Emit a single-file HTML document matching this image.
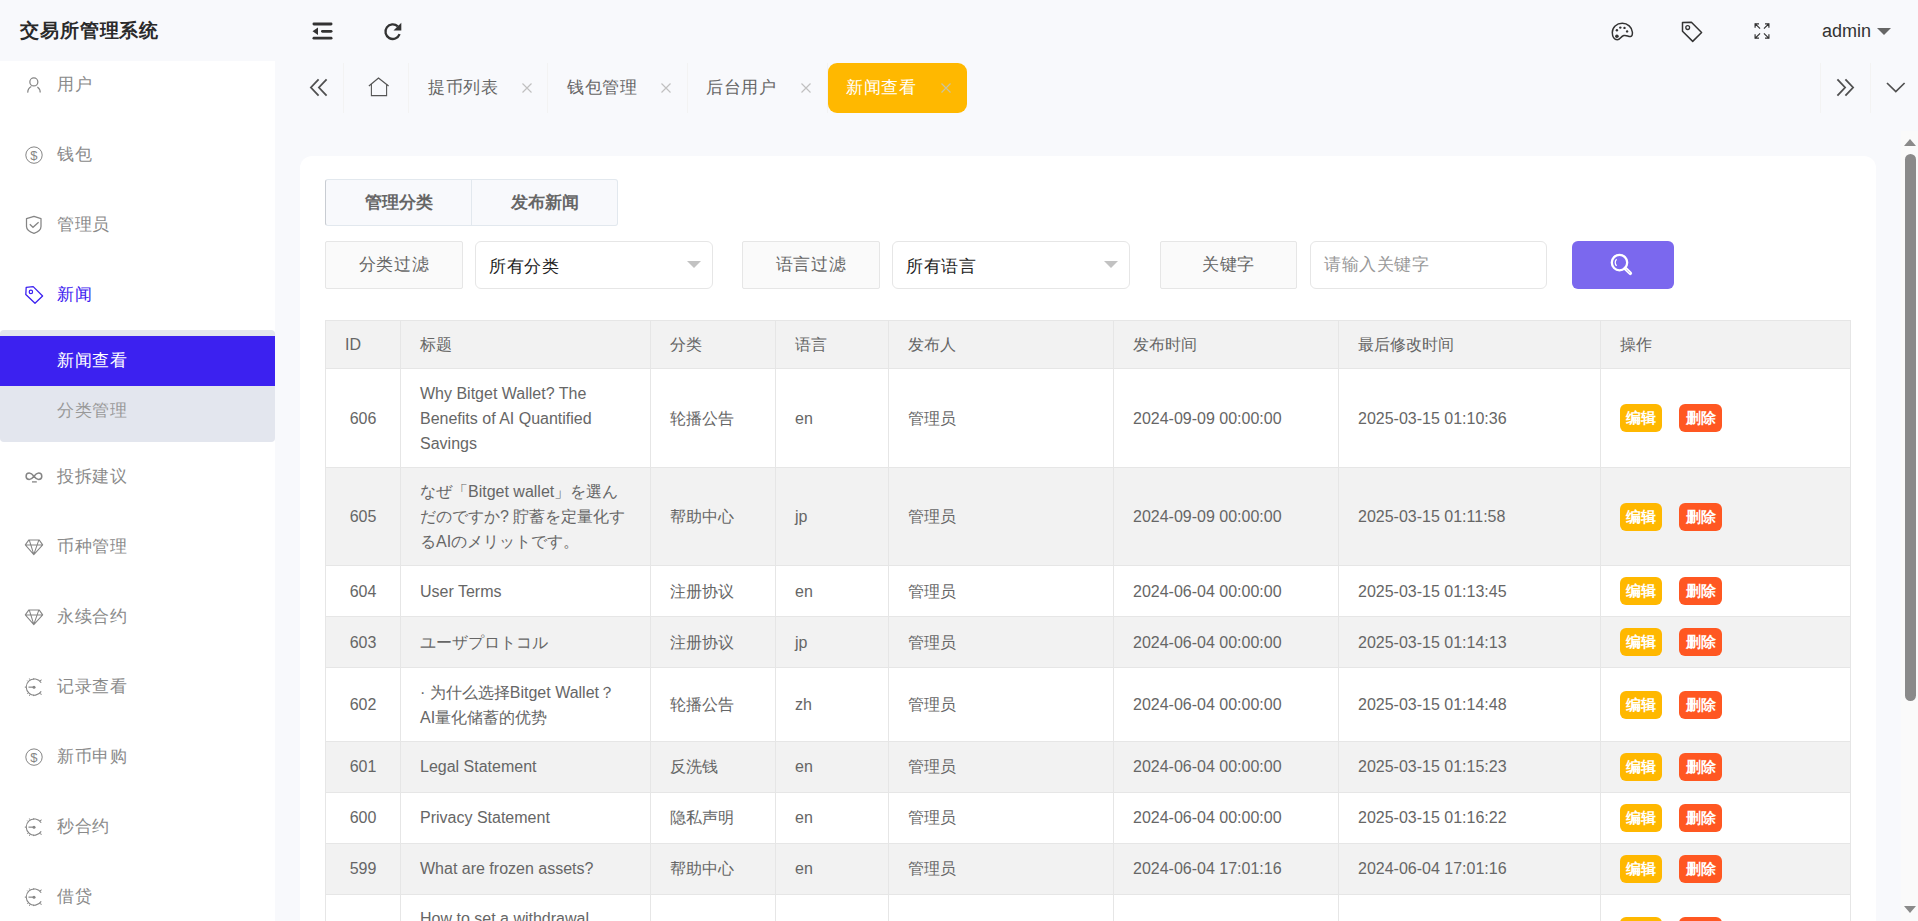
<!DOCTYPE html>
<html><head><meta charset="utf-8">
<style>
*{box-sizing:border-box;margin:0;padding:0}
html,body{width:1918px;height:921px;overflow:hidden}
body{position:relative;background:#f8f9fc;font-family:"Liberation Sans",sans-serif;color:#666}
.abs{position:absolute}
/* header */
#title{left:20px;top:16px;font-size:19px;letter-spacing:0.9px;font-weight:bold;color:#2a2a2a;line-height:30px;white-space:nowrap}
/* sidebar */
#side{left:0;top:61px;width:275px;height:860px;background:#fff;overflow:hidden}
.mi{position:absolute;left:0;width:275px;height:50px;line-height:50px;font-size:17px;letter-spacing:0.6px;color:#8a8a8a;white-space:nowrap}
.mi .tx{position:absolute;left:57px;top:0}
.mi svg{position:absolute;left:26px;top:17px}
#sub{position:absolute;left:0;top:269px;width:275px;height:112px;background:#e3e6ee;border-radius:4px}
/* tabs */
.tab{position:absolute;top:63px;height:50px;line-height:50px;font-size:17px;letter-spacing:0.6px;color:#666;white-space:nowrap}
.vd{position:absolute;top:63px;width:1px;height:50px;background:#f3f3f3}
.x{position:absolute;top:83px;width:10px;height:10px}
/* card */
#card{left:300px;top:156px;width:1576px;height:800px;background:#fff;border-radius:12px}
.lbl{position:absolute;top:241px;height:48px;line-height:46px;border:1px solid #e6e6e6;background:#fafafa;border-radius:2px;text-align:center;font-size:17px;letter-spacing:0.6px;color:#666}
.sel{position:absolute;top:241px;height:48px;line-height:50px;border:1px solid #e6e6e6;background:#fff;border-radius:6px;font-size:17px;color:#222;padding-left:13px;font-size:17px;letter-spacing:0.6px}
.tri{position:absolute;top:19px;line-height:0;width:0;height:0;border-left:7px solid transparent;border-right:7px solid transparent;border-top:7px solid #c2c2c2}
/* table */
#tbl{left:325px;top:320px;width:1526px}
.row{position:absolute;left:0;width:1526px;border-bottom:1px solid #e6e6e6;border-left:1px solid #e6e6e6}
.row>div{position:absolute;top:0;height:100%;border-right:1px solid #e6e6e6;display:flex;align-items:center;padding-left:19px;font-size:16px;line-height:25px;color:#666}
.ev{background:#f2f2f2}
.up>div:not(.c7){padding-bottom:2px}
.c0{left:0;width:75px;justify-content:center;padding-left:0 !important}
.c1{left:75px;width:250px;padding-right:15px}
.c2{left:325px;width:125px}
.c3{left:450px;width:113px}
.c4{left:563px;width:225px}
.c5{left:788px;width:225px}
.c6{left:1013px;width:262px}
.c7{left:1275px;width:250px}
.bd{display:inline-block;height:28px;line-height:28px;padding:0 6px;border-radius:6px;color:#fff;font-size:15px;font-weight:bold;margin-right:17px}
.bw{background:#ffb800}
.br{background:#ff5722;padding:0 6.5px}
/* scrollbar */
#sb{left:1901px;top:131px;width:17px;height:790px;background:#fafafa}
</style></head><body>

<div id="title" class="abs">交易所管理系统</div>

<!-- top toolbar icons -->
<svg class="abs" style="left:312px;top:22px" width="21" height="19" viewBox="0 0 21 19">
  <rect x="0.5" y="0.6" width="20" height="2.8" rx="1.4" fill="#333"/>
  <rect x="9" y="7.9" width="11.5" height="2.8" rx="1.4" fill="#333"/>
  <rect x="0.5" y="14.8" width="20" height="2.8" rx="1.4" fill="#333"/>
  <path d="M0.5 9.3 L6 5.6 L6 13 Z" fill="#333"/>
</svg>
<svg class="abs" style="left:382px;top:21px" width="22" height="22" viewBox="0 0 22 22">
  <path d="M17.6 13.2 A7.3 7.3 0 1 1 15.8 5.4" fill="none" stroke="#333" stroke-width="2.3"/>
  <path d="M19.3 1.8 L19.3 9.6 L11.5 9.6 Z" fill="#333"/>
</svg>

<svg class="abs" style="left:1611px;top:22px" width="23" height="19" viewBox="0 0 23 19">
  <path d="M11.3 1.3 C5.5 1.3 1.3 5.3 1.3 10.5 C1.3 15 3.5 17.7 6.3 17.7 C9.2 17.7 9.8 14.3 12.8 13.5 C15.8 12.8 17 14.7 19.6 14.5 C21.5 14.2 21.5 12 21.4 10.2 C21 5.3 16.6 1.3 11.3 1.3 Z" fill="none" stroke="#333" stroke-width="1.5"/>
  <circle cx="5.9" cy="14.2" r="1.8" fill="#333"/>
  <circle cx="5.9" cy="8.2" r="1.2" fill="#333"/>
  <circle cx="9.3" cy="5.6" r="1.2" fill="#333"/>
  <circle cx="13.5" cy="5.9" r="1.2" fill="#333"/>
  <circle cx="16.1" cy="9.4" r="1.2" fill="#333"/>
</svg>
<svg class="abs" style="left:1681px;top:21px" width="22" height="22" viewBox="0 0 22 22">
  <path d="M1.5 1.5 L10.4 1.3 L20.6 11.5 L11.7 20.4 L1.5 10.3 Z" fill="none" stroke="#333" stroke-width="1.5" stroke-linejoin="round"/>
  <circle cx="6.7" cy="6.6" r="1.9" fill="none" stroke="#333" stroke-width="1.3"/>
</svg>
<svg class="abs" style="left:1753px;top:22px" width="18" height="18" viewBox="0 0 18 18">
  <g fill="none" stroke="#333" stroke-width="1.2" stroke-linecap="square">
    <path d="M2.2 1.8 L6.6 6.2 M2.1 1.9 L2.1 5.2 M2.1 1.9 L5.4 1.9"/>
    <path d="M15.8 1.8 L11.4 6.2 M15.9 1.9 L15.9 5.2 M15.9 1.9 L12.6 1.9"/>
    <path d="M2.2 16.2 L6.6 11.8 M2.1 16.1 L2.1 12.8 M2.1 16.1 L5.4 16.1"/>
    <path d="M15.8 16.2 L11.4 11.8 M15.9 16.1 L15.9 12.8 M15.9 16.1 L12.6 16.1"/>
  </g>
</svg>
<div class="abs" style="left:1822px;top:16px;font-size:18px;line-height:30px;color:#333">admin</div>
<div class="abs" style="left:1877px;top:28px;width:0;height:0;border-left:7px solid transparent;border-right:7px solid transparent;border-top:7px solid #666"></div>

<!-- sidebar -->
<div id="side" class="abs">
  <div class="mi" style="top:-1px"><span class="tx">用户</span></div>
  <div class="mi" style="top:69px"><span class="tx">钱包</span></div>
  <div class="mi" style="top:139px"><span class="tx">管理员</span></div>
  <div class="mi" style="top:209px;color:#3c21f0"><span class="tx">新闻</span></div>
  <div class="mi" style="top:391px"><span class="tx">投拆建议</span></div>
  <div class="mi" style="top:461px"><span class="tx">币种管理</span></div>
  <div class="mi" style="top:531px"><span class="tx">永续合约</span></div>
  <div class="mi" style="top:601px"><span class="tx">记录查看</span></div>
  <div class="mi" style="top:671px"><span class="tx">新币申购</span></div>
  <div class="mi" style="top:741px"><span class="tx">秒合约</span></div>
  <div class="mi" style="top:811px"><span class="tx">借贷</span></div>
  <div id="sub">
    <div class="mi" style="top:6px;background:#3c21f0;color:#fff;font-weight:500"><span class="tx">新闻查看</span></div>
    <div class="mi" style="top:56px;color:#999"><span class="tx">分类管理</span></div>
  </div>
</div>
<svg class="abs" style="left:20px;top:70px" width="30" height="30" viewBox="0 0 30 30"><circle cx="13.84" cy="11.9" r="4" fill="none" stroke="#858585" stroke-width="1.25"/><path d="M7.8 22.6 A6.6 6.6 0 0 1 11.3 16.5 M17.4 17.1 A6.6 6.6 0 0 1 20.2 22.6" fill="none" stroke="#858585" stroke-width="1.25"/></svg>
<svg class="abs" style="left:20px;top:140px" width="30" height="30" viewBox="0 0 30 30"><circle cx="14" cy="15.1" r="8.2" fill="none" stroke="#858585" stroke-width="1"/><text x="13.9" y="19.6" font-size="13" text-anchor="middle" fill="#858585" font-family="Liberation Sans">$</text></svg>
<svg class="abs" style="left:20px;top:210px" width="30" height="30" viewBox="0 0 30 30"><path d="M14 6.4 L6.5 8.7 L6.5 16.5 C6.5 19.5 9.5 21.8 14 23.3 C18.5 21.8 21 19.5 21 16.5 L21 8.7 Z" fill="none" stroke="#858585" stroke-width="1.25" stroke-linejoin="round"/><path d="M9.8 14.2 L13 17.3 L18.6 12.2" fill="none" stroke="#858585" stroke-width="1.25"/></svg>
<svg class="abs" style="left:20px;top:280px" width="30" height="30" viewBox="0 0 30 30"><path d="M6.2 7.3 L13.2 6.6 L22.6 16 L15 23.3 L5.8 14.5 Z" fill="none" stroke="#3c21f0" stroke-width="1.3" stroke-linejoin="round"/><circle cx="10.9" cy="11.9" r="1.7" fill="none" stroke="#3c21f0" stroke-width="1.2"/></svg>
<svg class="abs" style="left:20px;top:462px" width="30" height="30" viewBox="0 0 30 30"><path d="M13.95 14.3 C12.6 12.5 11.5 11.1 9.3 11.1 A3.2 3.2 0 0 0 9.3 17.5 C11.5 17.5 12.6 16.1 13.95 14.3 C15.3 12.5 16.4 11.1 18.6 11.1 A3.2 3.2 0 0 1 18.6 17.5 C16.4 17.5 15.3 16.1 13.95 14.3 Z" fill="none" stroke="#858585" stroke-width="1.5"/><path d="M12 19.9 L16.8 19.9" stroke="#858585" stroke-width="1.3"/></svg>
<svg class="abs" style="left:20px;top:532px" width="30" height="30" viewBox="0 0 30 30"><path d="M8.9 7.9 L19.1 7.9 L22.7 12.9 L13.8 22.6 L5.3 12.9 Z M5.3 12.9 L22.7 12.9 M9.3 8.1 L13.8 22.4 L18.8 8.1" fill="none" stroke="#858585" stroke-width="1.05" stroke-linejoin="round"/></svg>
<svg class="abs" style="left:20px;top:602px" width="30" height="30" viewBox="0 0 30 30"><path d="M8.9 7.9 L19.1 7.9 L22.7 12.9 L13.8 22.6 L5.3 12.9 Z M5.3 12.9 L22.7 12.9 M9.3 8.1 L13.8 22.4 L18.8 8.1" fill="none" stroke="#858585" stroke-width="1.05" stroke-linejoin="round"/></svg>
<svg class="abs" style="left:20px;top:672px" width="30" height="30" viewBox="0 0 30 30"><path d="M21.2 10.8 A8.1 8.1 0 1 0 21.2 19.4" fill="none" stroke="#858585" stroke-width="1.05"/><path d="M8.5 15.15 L13.5 15.15" stroke="#858585" stroke-width="1.2"/><circle cx="14" cy="15.15" r="1.5" fill="#858585"/><path d="M13.7 6.2 L13.7 7.6 M13.7 22.7 L13.7 24.1 M4.8 15.15 L6.2 15.15 M7.3 8.6 L8.3 9.6 M7.3 21.7 L8.3 20.7 M19.9 8.7 L21.7 7.9 M19.9 21.6 L21.7 22.4 M9.4 6.5 L10 7.8 M9.4 23.8 L10 22.5" stroke="#858585" stroke-width="1"/></svg>
<svg class="abs" style="left:20px;top:742px" width="30" height="30" viewBox="0 0 30 30"><circle cx="14" cy="15.1" r="8.2" fill="none" stroke="#858585" stroke-width="1"/><text x="13.9" y="19.6" font-size="13" text-anchor="middle" fill="#858585" font-family="Liberation Sans">$</text></svg>
<svg class="abs" style="left:20px;top:812px" width="30" height="30" viewBox="0 0 30 30"><path d="M21.2 10.8 A8.1 8.1 0 1 0 21.2 19.4" fill="none" stroke="#858585" stroke-width="1.05"/><path d="M8.5 15.15 L13.5 15.15" stroke="#858585" stroke-width="1.2"/><circle cx="14" cy="15.15" r="1.5" fill="#858585"/><path d="M13.7 6.2 L13.7 7.6 M13.7 22.7 L13.7 24.1 M4.8 15.15 L6.2 15.15 M7.3 8.6 L8.3 9.6 M7.3 21.7 L8.3 20.7 M19.9 8.7 L21.7 7.9 M19.9 21.6 L21.7 22.4 M9.4 6.5 L10 7.8 M9.4 23.8 L10 22.5" stroke="#858585" stroke-width="1"/></svg>
<svg class="abs" style="left:20px;top:882px" width="30" height="30" viewBox="0 0 30 30"><path d="M21.2 10.8 A8.1 8.1 0 1 0 21.2 19.4" fill="none" stroke="#858585" stroke-width="1.05"/><path d="M8.5 15.15 L13.5 15.15" stroke="#858585" stroke-width="1.2"/><circle cx="14" cy="15.15" r="1.5" fill="#858585"/><path d="M13.7 6.2 L13.7 7.6 M13.7 22.7 L13.7 24.1 M4.8 15.15 L6.2 15.15 M7.3 8.6 L8.3 9.6 M7.3 21.7 L8.3 20.7 M19.9 8.7 L21.7 7.9 M19.9 21.6 L21.7 22.4 M9.4 6.5 L10 7.8 M9.4 23.8 L10 22.5" stroke="#858585" stroke-width="1"/></svg>

<!-- tabs bar -->
<svg class="abs" style="left:309px;top:78px" width="20" height="19" viewBox="0 0 20 19">
  <path d="M9.6 1.3 L1.9 9.5 L9.6 17.7 M17.6 1.3 L9.9 9.5 L17.6 17.7" fill="none" stroke="#505050" stroke-width="1.8"/>
</svg>
<div class="vd" style="left:343px"></div>
<svg class="abs" style="left:368px;top:77px" width="22" height="20" viewBox="0 0 22 20">
  <path d="M0.9 8.9 L10.5 1.1 L20.6 8.9" fill="none" stroke="#555" stroke-width="1.3"/>
  <path d="M3.4 6.9 L3.4 18.6 L18.6 18.6 L18.6 6.9" fill="none" stroke="#555" stroke-width="1.1"/>
</svg>
<div class="vd" style="left:408px"></div>
<div class="tab" style="left:428px">提币列表</div>
<svg class="x" style="left:522px" viewBox="0 0 10 10"><path d="M0.5 0.5 L9.5 9.5 M9.5 0.5 L0.5 9.5" stroke="#c0c0c0" stroke-width="1.15"/></svg>
<div class="vd" style="left:547px"></div>
<div class="tab" style="left:567px">钱包管理</div>
<svg class="x" style="left:661px" viewBox="0 0 10 10"><path d="M0.5 0.5 L9.5 9.5 M9.5 0.5 L0.5 9.5" stroke="#c0c0c0" stroke-width="1.15"/></svg>
<div class="vd" style="left:687px"></div>
<div class="tab" style="left:706px">后台用户</div>
<svg class="x" style="left:801px" viewBox="0 0 10 10"><path d="M0.5 0.5 L9.5 9.5 M9.5 0.5 L0.5 9.5" stroke="#c0c0c0" stroke-width="1.15"/></svg>
<div class="vd" style="left:827px"></div>
<div class="abs" style="left:828px;top:63px;width:139px;height:50px;background:#ffb800;border-radius:9px"></div>
<div class="tab" style="left:846px;color:#fff">新闻查看</div>
<svg class="x" style="left:941px" viewBox="0 0 10 10"><path d="M0.5 0.5 L9.5 9.5 M9.5 0.5 L0.5 9.5" stroke="#c9c3a0" stroke-width="1.2"/></svg>

<div class="vd" style="left:1820px"></div>
<svg class="abs" style="left:1836px;top:78px" width="20" height="19" viewBox="0 0 20 19">
  <path d="M1.4 1.3 L9.1 9.5 L1.4 17.7 M9.4 1.3 L17.1 9.5 L9.4 17.7" fill="none" stroke="#505050" stroke-width="1.8"/>
</svg>
<div class="vd" style="left:1870px"></div>
<svg class="abs" style="left:1886px;top:82px" width="20" height="11" viewBox="0 0 20 11">
  <path d="M1 1 L9.8 9.6 L18.6 1" fill="none" stroke="#505050" stroke-width="1.7"/>
</svg>

<!-- card -->
<div id="card" class="abs"></div>
<div class="abs" style="left:325px;top:179px;width:293px;height:47px;border:1px solid #e2e8ee;border-left-color:#c8ccd2;background:#f8f9fc;border-radius:3px"></div>
<div class="abs" style="left:471px;top:180px;width:1px;height:45px;background:#e2e8ee"></div>
<div class="abs" style="left:326px;top:180px;width:145px;height:45px;line-height:45px;text-align:center;font-size:17px;font-weight:bold;color:#666">管理分类</div>
<div class="abs" style="left:472px;top:180px;width:145px;height:45px;line-height:45px;text-align:center;font-size:17px;font-weight:bold;color:#666">发布新闻</div>

<div class="lbl" style="left:325px;width:138px">分类过滤</div>
<div class="sel" style="left:475px;width:238px">所有分类<span class="tri" style="left:211px"></span></div>
<div class="lbl" style="left:742px;width:138px">语言过滤</div>
<div class="sel" style="left:892px;width:238px">所有语言<span class="tri" style="left:211px"></span></div>
<div class="lbl" style="left:1160px;width:137px">关键字</div>
<div class="sel" style="left:1310px;width:237px;color:#999;line-height:46px">请输入关键字</div>
<div class="abs" style="left:1572px;top:241px;width:102px;height:48px;background:#7b68ee;border-radius:6px"></div>
<svg class="abs" style="left:1609px;top:253px" width="25" height="24" viewBox="0 0 25 24">
  <circle cx="10.5" cy="9.6" r="7.7" fill="none" stroke="#fff" stroke-width="2.3"/>
  <path d="M16.2 15.4 L21.3 20.3" stroke="#fff" stroke-width="3.6" stroke-linecap="round"/>
  <path d="M17.6 16.8 L20.6 19.6" stroke="#b9aef5" stroke-width="0.8" stroke-linecap="round"/>
  <path d="M7.6 6.3 A4.6 4.6 0 0 0 7.6 12.9" fill="none" stroke="#fff" stroke-width="1.3"/>
</svg>

<!-- TABLE -->
<div id="tbl" class="abs">
<div class="abs" style="left:0;top:0;width:1526px;height:1px;background:#e6e6e6"></div>
<div class="row ev" style="top:1px;height:48px"><div class="c0" style="justify-content:flex-start;padding-left:19px !important">ID</div><div class="c1">标题</div><div class="c2">分类</div><div class="c3">语言</div><div class="c4">发布人</div><div class="c5">发布时间</div><div class="c6">最后修改时间</div><div class="c7">操作</div></div>
<div class="row" style="top:49px;height:99px"><div class="c0">606</div><div class="c1"><span>Why Bitget Wallet? The<br>Benefits of AI Quantified<br>Savings</span></div><div class="c2">轮播公告</div><div class="c3">en</div><div class="c4">管理员</div><div class="c5">2024-09-09 00:00:00</div><div class="c6">2025-03-15 01:10:36</div><div class="c7"><span class="bd bw">编辑</span><span class="bd br">删除</span></div></div>
<div class="row ev" style="top:148px;height:98px"><div class="c0">605</div><div class="c1"><span>なぜ「Bitget wallet」を選ん<br>だのですか? 貯蓄を定量化す<br>るAIのメリットです。</span></div><div class="c2">帮助中心</div><div class="c3">jp</div><div class="c4">管理员</div><div class="c5">2024-09-09 00:00:00</div><div class="c6">2025-03-15 01:11:58</div><div class="c7"><span class="bd bw">编辑</span><span class="bd br">删除</span></div></div>
<div class="row" style="top:246px;height:51px"><div class="c0">604</div><div class="c1"><span>User Terms</span></div><div class="c2">注册协议</div><div class="c3">en</div><div class="c4">管理员</div><div class="c5">2024-06-04 00:00:00</div><div class="c6">2025-03-15 01:13:45</div><div class="c7"><span class="bd bw">编辑</span><span class="bd br">删除</span></div></div>
<div class="row ev" style="top:297px;height:51px"><div class="c0">603</div><div class="c1"><span>ユーザプロトコル</span></div><div class="c2">注册协议</div><div class="c3">jp</div><div class="c4">管理员</div><div class="c5">2024-06-04 00:00:00</div><div class="c6">2025-03-15 01:14:13</div><div class="c7"><span class="bd bw">编辑</span><span class="bd br">删除</span></div></div>
<div class="row" style="top:348px;height:74px"><div class="c0">602</div><div class="c1"><span>· 为什么选择Bitget Wallet？<br>AI量化储蓄的优势</span></div><div class="c2">轮播公告</div><div class="c3">zh</div><div class="c4">管理员</div><div class="c5">2024-06-04 00:00:00</div><div class="c6">2025-03-15 01:14:48</div><div class="c7"><span class="bd bw">编辑</span><span class="bd br">删除</span></div></div>
<div class="row ev up" style="top:422px;height:51px"><div class="c0">601</div><div class="c1"><span>Legal Statement</span></div><div class="c2">反洗钱</div><div class="c3">en</div><div class="c4">管理员</div><div class="c5">2024-06-04 00:00:00</div><div class="c6">2025-03-15 01:15:23</div><div class="c7"><span class="bd bw">编辑</span><span class="bd br">删除</span></div></div>
<div class="row up" style="top:473px;height:51px"><div class="c0">600</div><div class="c1"><span>Privacy Statement</span></div><div class="c2">隐私声明</div><div class="c3">en</div><div class="c4">管理员</div><div class="c5">2024-06-04 00:00:00</div><div class="c6">2025-03-15 01:16:22</div><div class="c7"><span class="bd bw">编辑</span><span class="bd br">删除</span></div></div>
<div class="row ev up" style="top:524px;height:51px"><div class="c0">599</div><div class="c1"><span>What are frozen assets?</span></div><div class="c2">帮助中心</div><div class="c3">en</div><div class="c4">管理员</div><div class="c5">2024-06-04 17:01:16</div><div class="c6">2024-06-04 17:01:16</div><div class="c7"><span class="bd bw">编辑</span><span class="bd br">删除</span></div></div>
<div class="row" style="top:575px;height:72px"><div class="c0">598</div><div class="c1"><span>How to set a withdrawal<br>address?</span></div><div class="c2">帮助中心</div><div class="c3">en</div><div class="c4">管理员</div><div class="c5">2024-06-04 17:01:16</div><div class="c6">2024-06-04 17:01:16</div><div class="c7"><span class="bd bw">编辑</span><span class="bd br">删除</span></div></div>
</div>
<div id="sb" class="abs">
  <div class="abs" style="left:3px;top:8px;width:0;height:0;border-left:6.5px solid transparent;border-right:6.5px solid transparent;border-bottom:7px solid #8a8a8a"></div>
  <div class="abs" style="left:4px;top:23px;width:11px;height:547px;background:#8a8a8a;border-radius:6px"></div>
  <div class="abs" style="left:3px;top:775px;width:0;height:0;border-left:6.5px solid transparent;border-right:6.5px solid transparent;border-top:7px solid #8a8a8a"></div>
</div>
</body></html>
